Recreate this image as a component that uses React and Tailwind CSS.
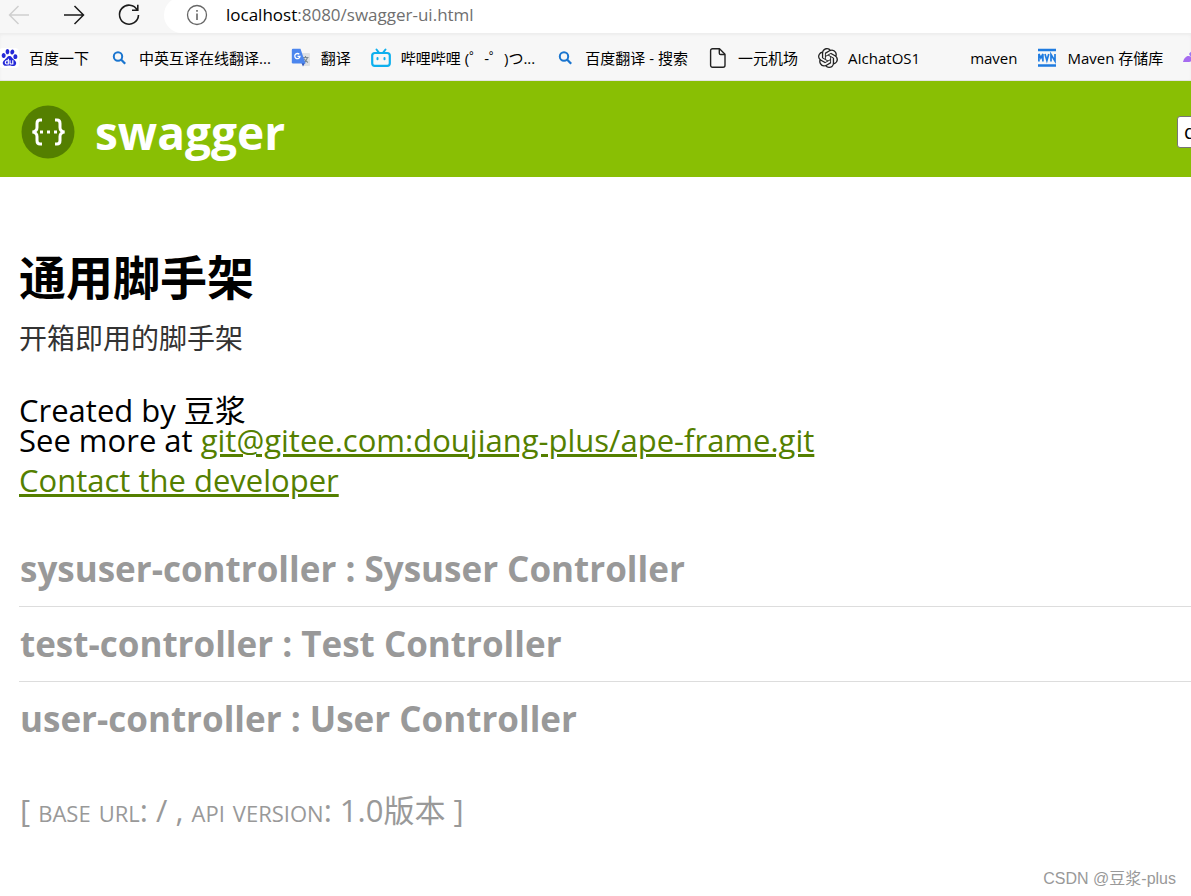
import { SiBaidu, SiOpenai } from 'react-icons/si';

function SearchIcon() {
  return (
    <svg viewBox="0 0 20 20" className="size-5" fill="none" stroke="#1a75cf" strokeWidth="2">
      <circle cx="9" cy="8.500" r="4.200" />
      <path d="M12 11.500l4.200 4.200" strokeWidth="2.300" />
    </svg>
  );
}

function BaiduIcon() {
  return (
    <span className="flex size-5 items-center justify-center rounded-sm bg-white">
      <SiBaidu className="size-[17px] text-[#2529d8]" />
    </span>
  );
}

function TranslateIcon() {
  return (
    <svg viewBox="0 0 20 20" className="size-5">
      <path d="M9 5h9a1 1 0 0 1 1 1v11a1 1 0 0 1-1 1h-6z" fill="#dfe1e3" />
      <path d="M11.500 9.500h6M14.500 8v1.500M16.500 9.500c-.6 2.300-2 4-4 5M13 10.500c.8 1.800 2 3 4 4" stroke="#7d8b93" strokeWidth="1.100" fill="none" />
      <path d="M10 14h4.500l-2.500 4.500z" fill="#3457b5" />
      <path d="M2 .8h7.500L14.500 15.500H2a1.200 1.200 0 0 1-1.200-1.200V2A1.200 1.200 0 0 1 2 .8z" fill="#4c86ee" />
      <path d="M8.300 6.300A2.600 2.600 0 1 0 9 8.300H6.500" stroke="#fff" strokeWidth="1.300" fill="none" />
    </svg>
  );
}

function FileIcon() {
  return (
    <svg viewBox="0 0 20 20" className="size-5" fill="none" stroke="#222" strokeWidth="1.400" strokeLinejoin="round">
      <path d="M4.500 .8h7L17 6.300v11a1.900 1.900 0 0 1-1.900 1.900H4.500a1.900 1.900 0 0 1-1.900-1.900V2.700A1.900 1.900 0 0 1 4.500 .8z" />
      <path d="M11.300 1v4.200a1.300 1.300 0 0 0 1.300 1.300H17" />
    </svg>
  );
}

function BilibiliIcon() {
  return (
    <svg viewBox="0 0 20 20" className="size-5" fill="none" stroke="#0eb0ee" strokeWidth="2.200" strokeLinecap="round">
      <rect x="1.200" y="5" width="17.600" height="12.800" rx="2.600" />
      <path d="M5.500 1.500l2.200 2.800M14.500 1.500l-2.200 2.800M6.500 10v1.200M13.500 10v1.200" strokeWidth="2" />
    </svg>
  );
}

function MvnIcon() {
  return (
    <svg viewBox="0 0 20 20" className="size-5" fill="none" stroke="#1f7be0">
      <path d="M1 2h18M1 17.500h18" strokeWidth="2.400" />
      <path d="M1.900 13.500V6l2 4 2-4v7.500M8 6l1.900 6.500L11.800 6M14 13.500V6.500l4 6.500V6" strokeWidth="1.700" />
    </svg>
  );
}

function PurpleIcon() {
  return (
    <svg viewBox="0 0 20 20" className="size-5">
      <path d="M0 14C1 10 4 7 7 8.500S9 14 6 14z" fill="#a66bf0" />
      <path d="M6 6c2-4 7-4 9 0s3 6 4 8h-8z" fill="#9b78f5" />
    </svg>
  );
}

const bookmarks = [
  { label: '百度一下', icon: <BaiduIcon /> },
  { label: '中英互译在线翻译...', icon: <SearchIcon /> },
  { label: '翻译', icon: <TranslateIcon /> },
  { label: '哔哩哔哩 (゜-゜)つ...', icon: <BilibiliIcon /> },
  { label: '百度翻译 - 搜索', icon: <SearchIcon /> },
  { label: '一元机场', icon: <FileIcon /> },
  { label: 'AIchatOS1', icon: <SiOpenai className="size-5 text-[#222]" /> },
  { label: 'maven', icon: null },
  { label: 'Maven 存储库', icon: <MvnIcon /> },
  { label: '', icon: <PurpleIcon /> },
];

function BrowserBar() {
  return (
    <div className="bg-[#f7f7f7]">
      <div className="flex h-[33px] items-start overflow-hidden">
        <div className="flex h-[30px] shrink-0 items-center gap-[31px] pl-[7px] pr-[23px]">
          <button aria-label="Back" className="text-[#cfcfcf]">
            <svg viewBox="0 0 24 24" className="size-6" fill="none" stroke="currentColor" strokeWidth="1.400">
              <path d="M22 12H2.500M11.500 3l-9 9 9 9" />
            </svg>
          </button>
          <button aria-label="Forward" className="text-[#1b1b1b]">
            <svg viewBox="0 0 24 24" className="size-6" fill="none" stroke="currentColor" strokeWidth="1.500">
              <path d="M2 12h19.500M12.500 3l9 9-9 9" />
            </svg>
          </button>
          <button aria-label="Refresh" className="text-[#1b1b1b]">
            <svg viewBox="0 0 24 24" className="size-6" fill="none" stroke="currentColor" strokeWidth="1.600">
              <path d="M20.300 7A9.500 9.500 0 1 0 21.500 12M20.800 1.800V7.300H15" />
            </svg>
          </button>
        </div>
        <div className="-mt-[3px] flex h-9 grow items-center gap-[18px] rounded-l-[18px] bg-white pl-[22px]">
          <svg viewBox="0 0 22 22" className="size-[22px] shrink-0" fill="none" stroke="#666" strokeWidth="1.300">
            <circle cx="11" cy="11" r="9.500" />
            <path d="M11 9.500v6.500M11 6v1.800" strokeWidth="1.600" />
          </svg>
          <p className="text-[17px] leading-6 text-[#6f6f6f]">
            <span className="text-black">localhost</span>:8080/swagger-ui.html
          </p>
        </div>
      </div>
      <nav className="flex h-12 items-center gap-5 overflow-hidden border-b border-[#e4e4e4] pt-0.5 shadow-[inset_0_2px_3px_#ededed]">
        {bookmarks.map((b, i) => (
          <a key={i} href="#" aria-label={b.label || 'Bookmark'} className="flex shrink-0 items-center gap-2.5 whitespace-nowrap text-[15px] leading-5 text-black first:-ml-px">
            <span className="size-5">{b.icon}</span>
            {b.label && <span>{b.label}</span>}
          </a>
        ))}
      </nav>
    </div>
  );
}

function SwaggerHeader() {
  return (
    <header className="flex h-24 items-center overflow-hidden bg-[#89bf04] pt-[5px]">
      <a href="#" className="flex items-center gap-5 pl-[21px] text-[46px] leading-[56px] font-bold text-white">
        <svg viewBox="0 0 54 54" className="size-[54px]">
          <circle cx="27" cy="27" r="26.500" fill="#547f00" />
          <g fill="none" stroke="#fff" strokeWidth="3">
            <path d="M21 15h-2c-2.500 0-3 1.500-3 3.500v4c0 2.500-1 4-4.500 4.500 3.500.5 4.500 2 4.500 4.500v4c0 2 .5 3.500 3 3.500h2" />
            <path d="M34 15h2c2.500 0 3 1.500 3 3.500v4c0 2.500 1 4 4.500 4.500-3.500.5-4.500 2-4.500 4.500v4c0 2-.5 3.500-3 3.500h-2" />
          </g>
          <path d="M19 25.500h3v3h-3zM26 25.500h3v3h-3zM33 25.500h3v3h-3z" fill="#fff" />
        </svg>
        <span>swagger</span>
      </a>
      <div className="ml-auto w-3.5 shrink-0">
        <select aria-label="API specification" className="h-8 w-80 appearance-none rounded-[3px] border border-[#767676] bg-white px-1.5 text-[20px] leading-7 text-black">
          <option>default (/v2/api-docs)</option>
        </select>
      </div>
    </header>
  );
}

const controllers = [
  'sysuser-controller : Sysuser Controller',
  'test-controller : Test Controller',
  'user-controller : User Controller',
];

export default function App() {
  return (
    <div className="min-h-screen overflow-hidden bg-white font-['Open_Sans','Noto_Sans_CJK_SC',sans-serif] text-black">
      <BrowserBar />
      <SwaggerHeader />
      <main className="pl-[19px] pt-[69px]">
        <h1 className="text-[47px] leading-[62px] font-bold">通用脚手架</h1>
        <p className="mt-[9px] text-[28px] leading-[42px] text-[#333]">开箱即用的脚手架</p>
        <div className="mt-9 text-[31px] leading-[30px]">
          <p>Created by 豆浆</p>
          <p>
            See more at{' '}
            <a href="#" className="text-[#547f00] underline">git@gitee.com:doujiang-plus/ape-frame.git</a>
          </p>
          <p className="mt-2.5">
            <a href="#" className="text-[#547f00] underline">Contact the developer</a>
          </p>
        </div>
        <ul className="mt-[37px]">
          {controllers.map((c) => (
            <li key={c} className="border-b border-[#ddd] last:border-transparent">
              <h2 className="h-[74px] pt-3 pl-px text-[35px] leading-[50px] font-bold text-[#999]">
                <a href="#">{c}</a>
              </h2>
            </li>
          ))}
        </ul>
        <p className="mt-8 pl-px text-[31px] leading-[42px] text-[#999]">
          [ <span className="[font-variant:small-caps]">base url</span>: / , <span className="[font-variant:small-caps]">api version</span>: 1.0版本 ]
        </p>
      </main>
      <footer className="mt-9 pr-[15px] text-right font-['Liberation_Sans','Noto_Sans_CJK_SC',sans-serif] text-[16px] leading-6 text-[#999]">
        CSDN @豆浆-plus
      </footer>
    </div>
  );
}
